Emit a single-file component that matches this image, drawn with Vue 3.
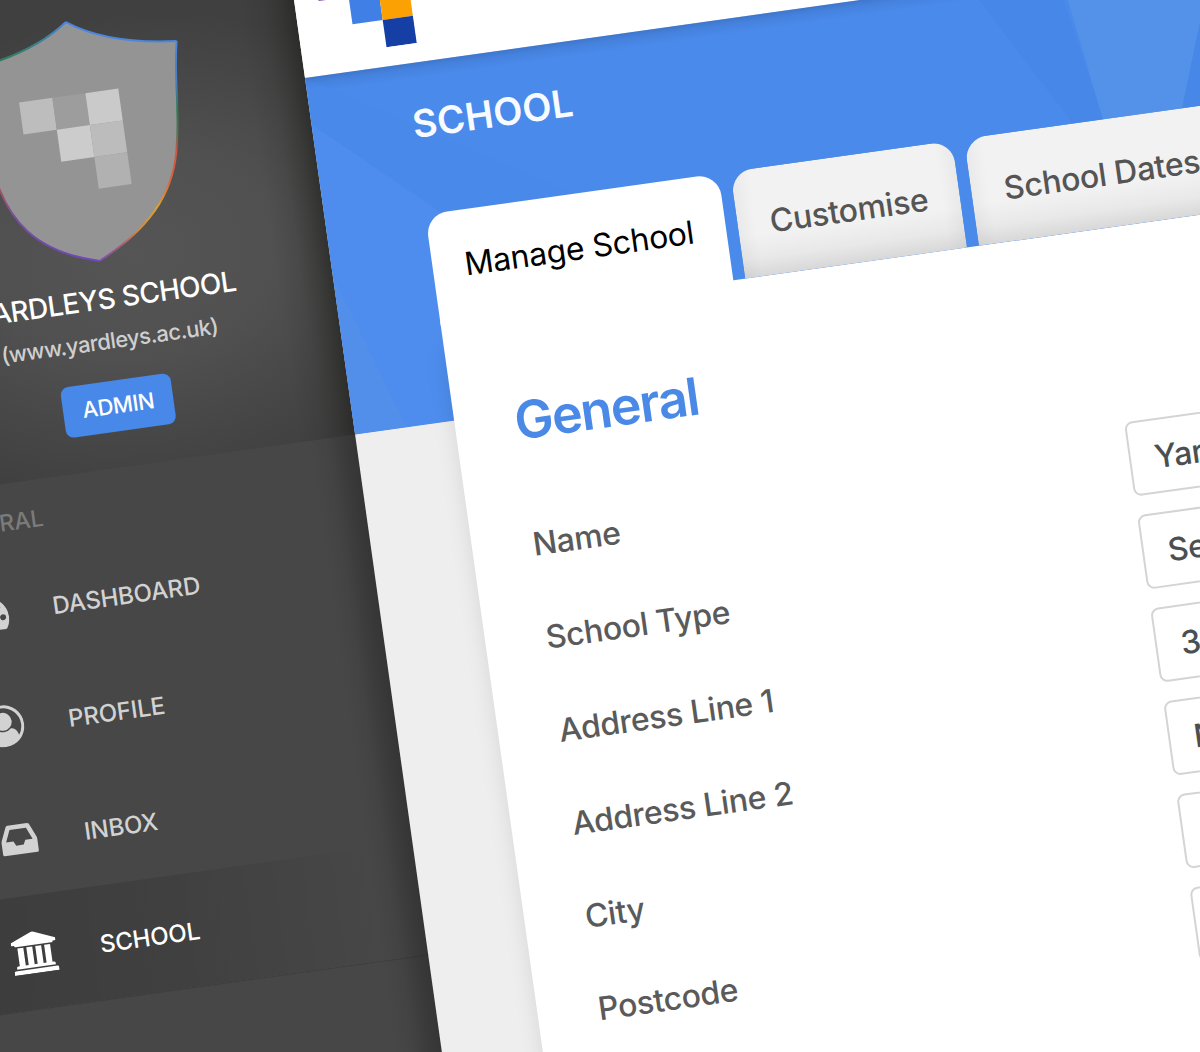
<script setup>
const tabs = ['Manage School', 'Customise', 'School Dates']

const fields = [
  { label: 'Name', value: 'Yardleys School' },
  { label: 'School Type', value: 'Secondary' },
  { label: 'Address Line 1', value: '3' },
  { label: 'Address Line 2', value: 'N' },
  { label: 'City', value: '' },
  { label: 'Postcode', value: '' },
]

const menu = [
  {
    label: 'Dashboard',
    width: 1792,
    path: 'M384 1152q0-53-37.5-90.5t-90.5-37.5-90.5 37.5-37.5 90.5 37.5 90.5 90.5 37.5 90.5-37.5 37.5-90.5zm192-448q0-53-37.5-90.5t-90.5-37.5-90.5 37.5-37.5 90.5 37.5 90.5 90.5 37.5 90.5-37.5 37.5-90.5zm428 481l101-382q6-26-7.5-48.5t-38.5-29.5-48 6.5-30 39.5l-101 382q-60 5-107 43.5t-63 98.5q-20 77 20 146t117 89 146-20 89-117q16-60-6-117t-72-91zm660-33q0-53-37.5-90.5t-90.5-37.5-90.5 37.5-37.5 90.5 37.5 90.5 90.5 37.5 90.5-37.5 37.5-90.5zm-640-640q0-53-37.5-90.5t-90.5-37.5-90.5 37.5-37.5 90.5 37.5 90.5 90.5 37.5 90.5-37.5 37.5-90.5zm448 192q0-53-37.5-90.5t-90.5-37.5-90.5 37.5-37.5 90.5 37.5 90.5 90.5 37.5 90.5-37.5 37.5-90.5zm320 448q0 261-141 483-19 29-54 29h-1402q-35 0-54-29-141-221-141-483 0-182 71-348t191-286 286-191 348-71 348 71 286 191 191 286 71 348z',
  },
  {
    label: 'Profile',
    width: 1792,
    path: 'M896 0q182 0 348 71t286 191 191 286 71 348q0 181-70.5 347t-190.5 286-286 191.5-349 71.5-349-71-285.5-191.5-190.5-286-71-347.5 71-348 191-286 286-191 348-71zm619 1351q149-205 149-455 0-156-61-298t-164-245-245-164-298-61-298 61-245 164-164 245-61 298q0 250 149 455 66-327 306-327 131 128 313 128t313-128q240 0 306 327zm-235-647q0-159-112.5-271.5t-271.5-112.5-271.5 112.5-112.5 271.5 112.5 271.5 271.5 112.5 271.5-112.5 112.5-271.5z',
  },
  {
    label: 'Inbox',
    width: 1792,
    path: 'M1151 960h316q-1-3-2.5-8t-2.5-8l-212-496h-708l-212 496q-1 2-2.5 8t-2.5 8h316l95 192h320zm513 30v482q0 26-19 45t-45 19h-1408q-26 0-45-19t-19-45v-482q0-62 25-123l238-552q10-25 36.5-42t52.5-17h832q26 0 52.5 17t36.5 42l238 552q25 61 25 123z',
  },
  {
    label: 'School',
    width: 1920,
    active: true,
    path: 'M960 0l960 384v128h-128q0 26-20.5 45t-48.5 19h-1526q-28 0-48.5-19t-20.5-45h-128v-128zm-704 640h256v768h128v-768h256v768h128v-768h256v768h128v-768h256v768h59q28 0 48.5 19t20.5 45v64h-1664v-64q0-26 20.5-45t48.5-19h59v-768zm1595 960q28 0 48.5 19t20.5 45v128h-1920v-128q0-26 20.5-45t48.5-19h1782z',
  },
]
</script>

<template>
  <div class="viewport">
    <div class="page">
      <aside class="sidebar">
        <section class="profile">
          <svg class="shield" width="222" height="246" viewBox="-111 -91 222 246">
            <defs>
              <linearGradient id="edge-right" gradientUnits="userSpaceOnUse" x1="0" y1="-55" x2="0" y2="153">
                <stop offset="0" stop-color="#4a86e0" />
                <stop offset="0.2" stop-color="#4a7fc4" />
                <stop offset="0.33" stop-color="#2f7a50" />
                <stop offset="0.45" stop-color="#5d7556" />
                <stop offset="0.52" stop-color="#cc5548" />
                <stop offset="0.66" stop-color="#d9643c" />
                <stop offset="0.78" stop-color="#e0a02c" />
                <stop offset="0.88" stop-color="#cc8a4a" />
                <stop offset="0.94" stop-color="#a05a78" />
                <stop offset="1" stop-color="#7a50b4" />
              </linearGradient>
              <linearGradient id="edge-left" gradientUnits="userSpaceOnUse" x1="0" y1="-89" x2="0" y2="153">
                <stop offset="0" stop-color="#4a86e0" />
                <stop offset="0.07" stop-color="#3c8290" />
                <stop offset="0.13" stop-color="#2f7a50" />
                <stop offset="0.5" stop-color="#2f7a50" />
                <stop offset="0.62" stop-color="#b0504c" />
                <stop offset="0.76" stop-color="#7a50a0" />
                <stop offset="1" stop-color="#7048b8" />
              </linearGradient>
            </defs>
            <path
              d="M0-88.7Q38-61 107-54.5C99-18 101 10 93 46.8C86 88 62 124 0 152.6C-62 135-86 100-93 46.8C-101 10-99-18-107-54.5Q-38-61 0-88.7Z"
              fill="#949494"
            />
            <path d="M0-88.7Q38-61 107-54.5" fill="none" stroke="#4a86e0" stroke-width="2" />
            <path d="M107-54.5C99-18 101 10 93 46.8C86 88 62 124 0 152.6" fill="none" stroke="url(#edge-right)" stroke-width="2" />
            <path
              d="M0 152.6C-62 135-86 100-93 46.8C-101 10-99-18-107-54.5Q-38-61 0-88.7"
              fill="none"
              stroke="url(#edge-left)"
              stroke-width="2"
            />
            <g>
              <rect x="-57.6" y="-15.5" width="33.6" height="32.2" fill="#bdbdbd" />
              <rect x="-24" y="-15.5" width="33.4" height="32.2" fill="#9d9d9d" />
              <rect x="9.4" y="-15.5" width="33.2" height="32.2" fill="#cacaca" />
              <rect x="-24" y="16.7" width="33.4" height="32.2" fill="#cccccc" />
              <rect x="9.4" y="16.7" width="33.2" height="32.2" fill="#bcbcbc" />
              <rect x="9.4" y="48.9" width="33.2" height="32" fill="#b1b1b1" />
            </g>
          </svg>
          <h2 class="school-name">YARDLEYS SCHOOL</h2>
          <p class="school-url">(www.yardleys.ac.uk)</p>
          <button class="role" type="button">ADMIN</button>
        </section>

        <nav class="menu">
          <div class="menu-title">GENERAL</div>
          <a v-for="item in menu" :key="item.label" class="menu-item" :class="{ active: item.active }">
            <span class="menu-icon">
              <svg :viewBox="`0 0 ${item.width} 1792`" height="42" fill="currentColor">
                <path :d="item.path" fill-rule="evenodd" />
              </svg>
            </span>
            <span class="menu-label">{{ item.label }}</span>
          </a>
        </nav>
      </aside>

      <main class="content">
        <header class="topbar">
          <svg class="logo" width="92" height="83" viewBox="0 0 92 83">
            <rect x="0" y="0" width="30.5" height="27.7" fill="#7b4fa8" />
            <rect x="61" y="0" width="30.5" height="27.7" fill="#2f9e5b" />
            <rect x="30.5" y="27.7" width="30.5" height="27.7" fill="#3f7fe6" />
            <rect x="61" y="27.7" width="30.5" height="27.7" fill="#fca103" />
            <rect x="61" y="55.4" width="30.5" height="27.6" fill="#163fa6" />
          </svg>
        </header>

        <section class="banner">
          <svg class="facets" width="942" height="360" viewBox="0 0 942 360">
            <polygon points="0,0 0,47 106,143 106,152 250,152" fill="#4989ea" />
            <polygon points="0,47 116,152 116,360 0,360" fill="#4e8dee" />
            <polygon points="0,200 52,360 0,360" fill="#528fea" />
            <polygon points="669,0 757,0 790,180 770,180" fill="#4787e8" />
            <polygon points="762,0 919,0 858,170 787,170" fill="#5491e8" />
            <polygon points="919,0 942,0 942,170 858,170" fill="#4787e8" />
          </svg>
          <h1 class="page-title">SCHOOL</h1>
        </section>

        <div class="panel">
          <div class="tabs">
            <div v-for="(tab, i) in tabs" :key="tab" class="tab" :class="{ current: i === 0 }">{{ tab }}</div>
          </div>
          <section class="card">
            <h2 class="card-title">General</h2>
            <div v-for="field in fields" :key="field.label" class="field">
              <label class="field-label">{{ field.label }}</label>
              <div class="field-input">{{ field.value }}</div>
            </div>
          </section>
        </div>
      </main>
    </div>
  </div>
</template>

<style>
body {
  margin: 0;
  overflow: hidden;
}
</style>

<style scoped>
.viewport {
  width: 1200px;
  height: 1052px;
  overflow: hidden;
  display: flow-root;
  background: #474747;
  font-family: Inter, 'Liberation Sans', sans-serif;
}

.page {
  display: flex;
  width: 1400px;
  height: 1260px;
  margin: -62px 0 0 -153.5px;
  transform-origin: 458px 140px;
  transform: rotate(-8deg);
}

/* Sidebar */
.sidebar {
  width: 458px;
  flex: none;
  background: linear-gradient(to left, #353535 0, #3b3b3b 14px, #434343 28px, #474747 46px);
}

.profile {
  height: 500px;
  display: flex;
  flex-direction: column;
  align-items: center;
  background:
    linear-gradient(to left, rgba(30, 32, 28, 0.6) 0, rgba(35, 37, 33, 0.4) 14px, rgba(40, 40, 40, 0.15) 32px, rgba(40, 40, 40, 0) 56px),
    radial-gradient(ellipse 330px 240px at 58% 58%, #555555 0, #505050 45%, #474747 75%, #404040 100%);
}

.shield {
  flex: none;
  margin-top: 49px;
}

.school-name {
  margin: 16px 0 0 1px;
  font-size: 28px;
  line-height: 40px;
  font-weight: 500;
  letter-spacing: -0.55px;
  color: #ffffff;
}

.school-url {
  margin: 6.5px 2px 0 0;
  font-size: 22px;
  line-height: 30px;
  font-weight: 500;
  letter-spacing: -0.54px;
  color: #cfcfcf;
}

.role {
  width: 111px;
  height: 51.5px;
  margin: 25px 3px 0 0;
  padding: 0;
  border: 0;
  border-radius: 8px;
  background: #4888e8;
  color: #ffffff;
  font: 500 22px/51.5px Inter, 'Liberation Sans', sans-serif;
  letter-spacing: -0.4px;
}

.menu-title {
  height: 68.5px;
  padding-left: 31px;
  box-sizing: border-box;
  font-size: 23px;
  line-height: 79px;
  font-weight: 500;
  color: #7b7b7b;
}

.menu-item {
  height: 114.2px;
  display: flex;
  align-items: center;
  padding-left: 38.5px;
  box-sizing: border-box;
  color: #d2d2d2;
}

.menu-item.active {
  color: #ffffff;
  background: linear-gradient(to right, rgba(0, 0, 0, 0.15), rgba(0, 0, 0, 0.1) 45%, rgba(0, 0, 0, 0) 92%);
  box-shadow: 0 1px 0 rgba(0, 0, 0, 0.1);
}

.menu-icon {
  width: 60px;
  display: flex;
  justify-content: center;
}

.menu-icon svg {
  display: block;
}

.menu-label {
  padding: 4px 0 0 36px;
  font-size: 24px;
  line-height: 32px;
  font-weight: 450;
  letter-spacing: -0.1px;
  text-transform: uppercase;
}

/* Content */
.content {
  width: 942px;
  flex: none;
  background: #eeeeee;
}

.topbar {
  height: 140px;
  display: flex;
  box-sizing: border-box;
  padding: 38px 0 0 24px;
  background: #ffffff;
}

.logo {
  flex: none;
}

.banner {
  position: relative;
  height: 360px;
  background: linear-gradient(rgba(30, 60, 110, 0.26), rgba(30, 60, 110, 0.1) 6px, rgba(30, 60, 110, 0) 16px), #4a8aeb;
}

.facets {
  position: absolute;
  inset: 0;
  z-index: 0;
  mask-image: linear-gradient(transparent, #000 16px);
}

.page-title {
  position: relative;
  margin: 0;
  padding-left: 100px;
  font-size: 38px;
  line-height: 122px;
  font-weight: 600;
  letter-spacing: 0.15px;
  color: #f7fbff;
}

.panel {
  position: relative;
  margin: -208px 0 0 99.7px;
}

.tabs {
  display: flex;
  align-items: flex-start;
  gap: 12px;
  height: 108px;
}

.tab {
  height: 108px;
  box-sizing: border-box;
  padding: 1px 32.5px 0 32.3px;
  border-radius: 22px 22px 0 0;
  font-size: 32px;
  line-height: 108px;
  font-weight: 450;
  letter-spacing: -0.32px;
  white-space: nowrap;
  color: #555555;
  background:
    linear-gradient(to top, rgba(0, 0, 0, 0.11), rgba(0, 0, 0, 0.04) 18px, rgba(0, 0, 0, 0) 42px),
    linear-gradient(to right, rgba(0, 0, 0, 0.035), rgba(0, 0, 0, 0) 18px, rgba(0, 0, 0, 0) calc(100% - 18px), rgba(0, 0, 0, 0.035)),
    #f2f2f2;
}

/* The open tab runs on into the card without a seam */
.tab.current {
  width: 296.5px;
  height: 112px;
  padding: 1px 0 0 32.5px;
  font-weight: 400;
  letter-spacing: -0.28px;
  color: #000000;
  background: #ffffff;
}

.card {
  height: 900px;
  box-sizing: border-box;
  padding: 77px 0 0 61px;
  background: #ffffff;
  box-shadow: 0 32px 22px rgba(0, 0, 0, 0.1);
}

.card-title {
  margin: 0 0 44px;
  padding-top: 1px;
  font-size: 52px;
  line-height: 64px;
  font-weight: 600;
  letter-spacing: -1.55px;
  text-indent: -1px;
  color: #4a8ae6;
}

.field {
  display: flex;
  align-items: center;
  height: 93.9px;
  font-size: 32px;
  line-height: 40px;
  font-weight: 450;
  letter-spacing: -0.36px;
}

.field-label {
  width: 602px;
  flex: none;
  padding-top: 2px;
  color: #5a5a5a;
}

.field-input {
  width: 300px;
  height: 75px;
  flex: none;
  box-sizing: border-box;
  padding: 0 24px;
  border: 2px solid #d4d4d4;
  border-radius: 8px;
  line-height: 73px;
  color: #4a5052;
}
</style>
